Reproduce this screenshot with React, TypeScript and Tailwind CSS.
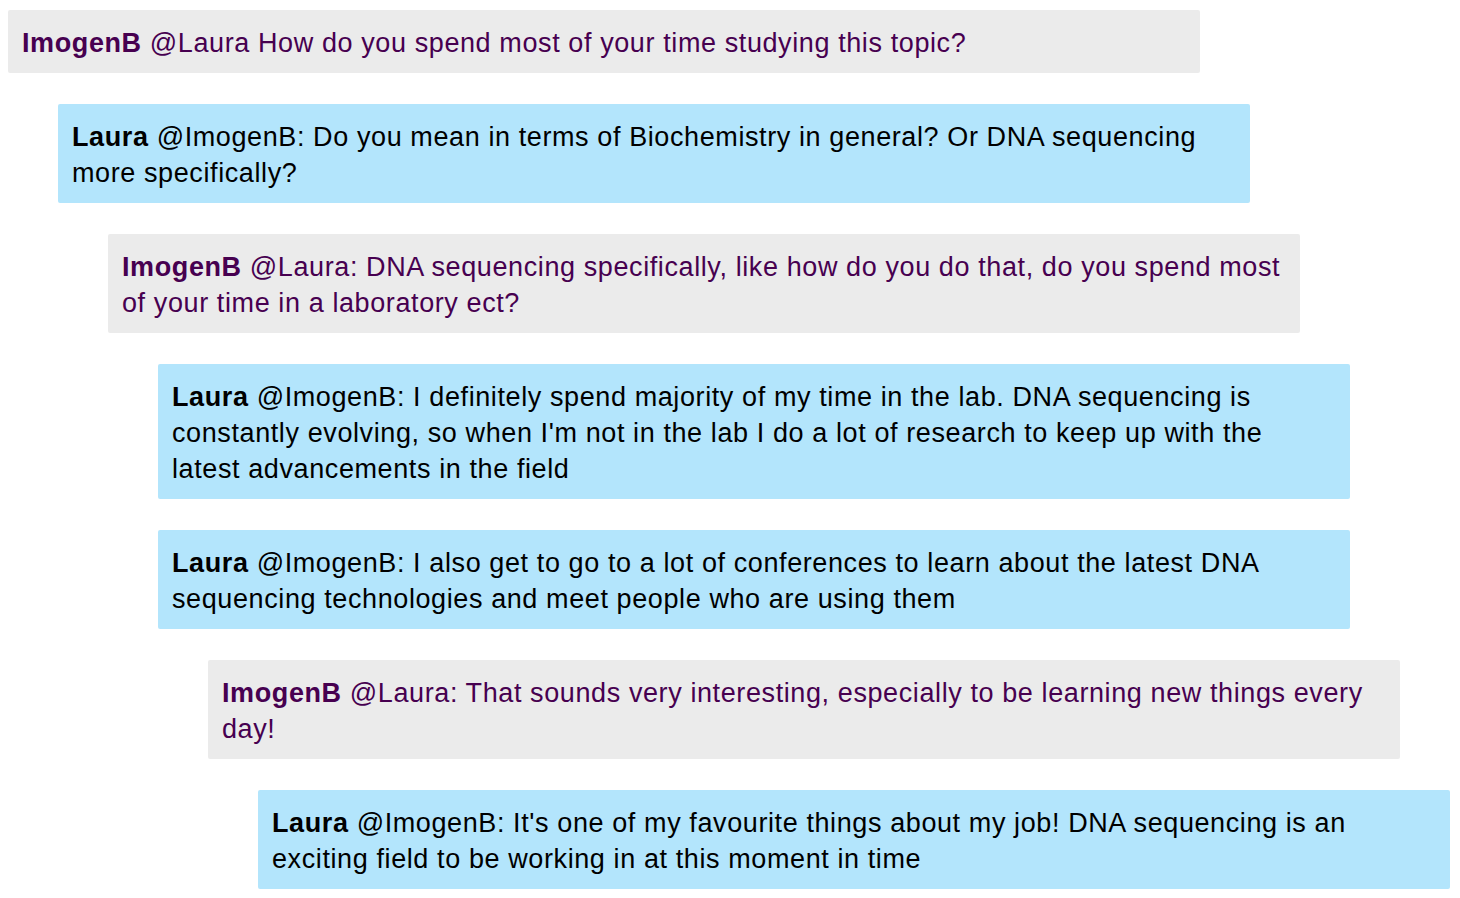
const messages = [
  { user: "ImogenB", text: "@Laura How do you spend most of your time studying this topic?", indent: 0 },
  { user: "Laura", text: "@ImogenB: Do you mean in terms of Biochemistry in general? Or DNA sequencing more specifically?", indent: 1 },
  { user: "ImogenB", text: "@Laura: DNA sequencing specifically, like how do you do that, do you spend most of your time in a laboratory ect?", indent: 2 },
  { user: "Laura", text: "@ImogenB: I definitely spend majority of my time in the lab. DNA sequencing is constantly evolving, so when I'm not in the lab I do a lot of research to keep up with the latest advancements in the field", indent: 3 },
  { user: "Laura", text: "@ImogenB: I also get to go to a lot of conferences to learn about the latest DNA sequencing technologies and meet people who are using them", indent: 3 },
  { user: "ImogenB", text: "@Laura: That sounds very interesting, especially to be learning new things every day!", indent: 4 },
  { user: "Laura", text: "@ImogenB: It's one of my favourite things about my job! DNA sequencing is an exciting field to be working in at this moment in time", indent: 5 },
];

const indents = ["ml-0", "ml-[50px]", "ml-[100px]", "ml-[150px]", "ml-[200px]", "ml-[250px]"];

export default function App() {
  return (
    <div className="min-h-screen bg-white pt-[10px] pl-[8px] font-['Liberation_Sans',Arial,sans-serif]">
      <div className="flex flex-col gap-[31px]">
        {messages.map((m, i) => {
          const isLaura = m.user === "Laura";
          return (
            <div
              key={i}
              className={
                "w-[1192px] rounded-[2px] px-[14px] pt-[14.5px] pb-[12.5px] text-[27px] leading-[36px] tracking-[0.6px] " +
                indents[m.indent] +
                (isLaura ? " bg-[#b3e5fc] text-black" : " bg-[#ebebeb] text-[#470050]")
              }
            >
              <span className="font-bold">{m.user}</span> {m.text}
            </div>
          );
        })}
      </div>
    </div>
  );
}
